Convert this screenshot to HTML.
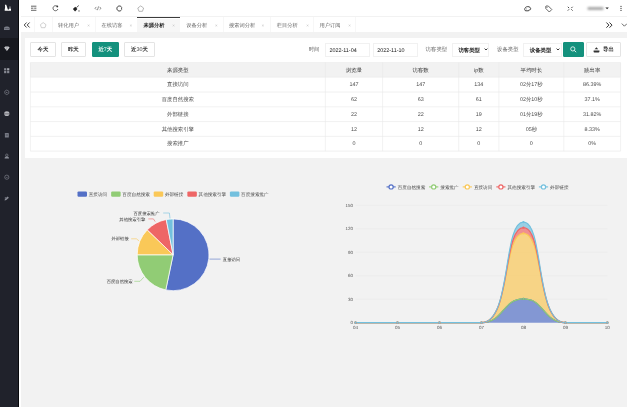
<!DOCTYPE html>
<html><head><meta charset="utf-8">
<style>
*{margin:0;padding:0;box-sizing:border-box}
html,body{width:627px;height:407px;overflow:hidden;background:#f2f2f2;font-family:"Liberation Sans",sans-serif;color:#555;text-rendering:geometricPrecision}
#wrap{position:absolute;left:0;top:0;width:627px;height:407px;will-change:transform}
#side{position:absolute;left:0;top:0;width:19px;height:407px;background:#20222b}
#sact{position:absolute;left:0;top:37.7px;width:19px;height:22px;background:#17181e}
#sideedge{position:absolute;left:18.2px;top:0;width:1px;height:407px;background:#08090c}
#wstrip{position:absolute;left:19.2px;top:0;width:2px;height:407px;background:#fff}
#hdr{position:absolute;left:19px;top:0;width:608px;height:17.2px;background:#fff;border-bottom:0.5px solid #f2f2f2}
#tabs{position:absolute;left:19px;top:17.2px;width:608px;height:15.2px;background:#fff}
.tab{position:absolute;top:17.2px;height:15.2px;font-size:5.25px;line-height:18px;color:#666;white-space:nowrap}
.tab .x{position:absolute;top:0;font-size:4.5px;color:#aaa}
.sep{position:absolute;top:17.2px;width:0.5px;height:15.2px;background:#f7f7f7}
#card{position:absolute;left:25px;top:37.5px;width:602px;height:120.5px;background:#fff}
.btn{position:absolute;top:42.3px;height:14.3px;border:0.5px solid #e4e4e4;border-radius:1px;background:#fff;font-size:5.4px;line-height:15.8px;text-align:center;color:#333}
.btn.g{background:#14917d;border-color:#14917d;color:#fff}
.lbl{position:absolute;top:42.3px;height:14.3px;font-size:5.4px;line-height:16.9px;color:#666}
.inp{position:absolute;top:42.5px;height:14px;border:0.5px solid #f1f1f1;background:#fff;font-size:5.4px;line-height:14.6px;color:#111;padding-left:3.6px}
.sel{color:#222;padding-left:5.5px}
.td{position:absolute;height:14.77px;font-size:5.4px;text-align:center;color:#4a4a4a;line-height:17.6px;white-space:nowrap}
.td.h{color:#333;line-height:16.8px}
svg text{font-family:"Liberation Sans",sans-serif}
b.c{font-weight:500}
.act b.c{font-weight:700}
.btn b.c,.sel b.c{font-weight:700}
tspan.c{font-weight:500}
.pl{font-size:4.35px;fill:#333}
.lg{font-size:4.6px;fill:#444}
.ax{font-size:4.5px;fill:#555}
</style></head><body><div id="wrap">
<div id="side"></div>
<div id="sact"></div>
<div id="sideedge"></div>
<div id="hdr"></div>
<div id="tabs"></div>
<div id="wstrip"></div>

<div style="position:absolute;left:137.4px;top:18.8px;width:42.3px;height:13.6px;background:#f6f6f6"></div>
<div style="position:absolute;left:137.4px;top:17.2px;width:42.3px;height:1.3px;background:#3c3c3c"></div>
<div class="sep" style="left:34.3px"></div>
<div class="sep" style="left:51.6px"></div>
<div class="sep" style="left:95px"></div><div class="sep" style="left:222.6px"></div><div class="sep" style="left:270px"></div><div class="sep" style="left:313px"></div><div class="sep" style="left:355px"></div>
<div class="tab" style="left:57.9px"><b class="c">转化用户</b></div><div class="tab" style="left:87.3px;font-size:4.5px;color:#c2c2c2;line-height:18.6px">×</div>
<div class="tab" style="left:101.5px"><b class="c">在线访客</b></div><div class="tab" style="left:129.60000000000002px;font-size:4.5px;color:#c2c2c2;line-height:18.6px">×</div>
<div class="tab act" style="left:143.4px;color:#222"><b class="c">来源分析</b></div><div class="tab" style="left:172.20000000000002px;font-size:4.5px;color:#c2c2c2;line-height:18.6px">×</div>
<div class="tab" style="left:186.2px"><b class="c">设备分析</b></div><div class="tab" style="left:215.10000000000002px;font-size:4.5px;color:#c2c2c2;line-height:18.6px">×</div>
<div class="tab" style="left:229px"><b class="c">搜索词分析</b></div><div class="tab" style="left:261.6px;font-size:4.5px;color:#c2c2c2;line-height:18.6px">×</div>
<div class="tab" style="left:276.8px"><b class="c">栏目分析</b></div><div class="tab" style="left:306.3px;font-size:4.5px;color:#c2c2c2;line-height:18.6px">×</div>
<div class="tab" style="left:319.5px"><b class="c">用户订阅</b></div><div class="tab" style="left:348.2px;font-size:4.5px;color:#c2c2c2;line-height:18.6px">×</div>

<div id="card"></div>
<div class="btn" style="left:30.4px;width:25.2px"><b class="c">今天</b></div>
<div class="btn" style="left:61px;width:24.6px"><b class="c">昨天</b></div>
<div class="btn g" style="left:91.7px;width:27.2px"><b class="c">近</b>7<b class="c">天</b></div>
<div class="btn" style="left:124.3px;width:30.3px"><b class="c">近</b>30<b class="c">天</b></div>

<div class="lbl" style="left:308.7px"><b class="c">时间</b></div>
<div class="inp" style="left:324.9px;width:45.3px">2022-11-04</div>
<div class="inp" style="left:372.7px;width:45.2px">2022-11-10</div>
<div class="lbl" style="left:425.6px"><b class="c">访客类型</b></div>
<div class="inp sel" style="left:451.9px;width:37.5px"><b class="c">访客类型</b></div>
<div class="lbl" style="left:497px"><b class="c">设备类型</b></div>
<div class="inp sel" style="left:523.3px;width:38.3px"><b class="c">设备类型</b></div>
<div class="btn g" style="left:562.9px;width:21px"></div>
<div class="btn" style="left:586.2px;width:34.4px;padding-left:10px"><b class="c">导出</b></div>

<div style="position:absolute;left:30.4px;top:62.5px;width:590.20px;height:14.77px;background:#f2f2f2"></div>
<svg width="627" height="407" style="position:absolute;left:0;top:0">
<line x1="30.4" y1="62.50" x2="620.6" y2="62.50" stroke="#e8e8e8" stroke-width="0.6"/>
<line x1="30.4" y1="77.27" x2="620.6" y2="77.27" stroke="#e8e8e8" stroke-width="0.6"/>
<line x1="30.4" y1="92.04" x2="620.6" y2="92.04" stroke="#e8e8e8" stroke-width="0.6"/>
<line x1="30.4" y1="106.81" x2="620.6" y2="106.81" stroke="#e8e8e8" stroke-width="0.6"/>
<line x1="30.4" y1="121.58" x2="620.6" y2="121.58" stroke="#e8e8e8" stroke-width="0.6"/>
<line x1="30.4" y1="136.35" x2="620.6" y2="136.35" stroke="#e8e8e8" stroke-width="0.6"/>
<line x1="30.4" y1="151.12" x2="620.6" y2="151.12" stroke="#e8e8e8" stroke-width="0.6"/>
<line x1="30.4" y1="62.5" x2="30.4" y2="151.12" stroke="#e8e8e8" stroke-width="0.6"/>
<line x1="325.3" y1="62.5" x2="325.3" y2="151.12" stroke="#e8e8e8" stroke-width="0.6"/>
<line x1="382.6" y1="62.5" x2="382.6" y2="151.12" stroke="#e8e8e8" stroke-width="0.6"/>
<line x1="458.7" y1="62.5" x2="458.7" y2="151.12" stroke="#e8e8e8" stroke-width="0.6"/>
<line x1="498.9" y1="62.5" x2="498.9" y2="151.12" stroke="#e8e8e8" stroke-width="0.6"/>
<line x1="563.8" y1="62.5" x2="563.8" y2="151.12" stroke="#e8e8e8" stroke-width="0.6"/>
<line x1="620.6" y1="62.5" x2="620.6" y2="151.12" stroke="#e8e8e8" stroke-width="0.6"/>
</svg>
<div class="td h" style="left:30.40px;top:62.50px;width:294.90px"><b class="c">来源类型</b></div>
<div class="td h" style="left:325.30px;top:62.50px;width:57.30px"><b class="c">浏览量</b></div>
<div class="td h" style="left:382.60px;top:62.50px;width:76.10px"><b class="c">访客数</b></div>
<div class="td h" style="left:458.70px;top:62.50px;width:40.20px">ip<b class="c">数</b></div>
<div class="td h" style="left:498.90px;top:62.50px;width:64.90px"><b class="c">平均时长</b></div>
<div class="td h" style="left:563.80px;top:62.50px;width:56.80px"><b class="c">跳出率</b></div>
<div class="td" style="left:30.40px;top:77.27px;width:294.90px"><b class="c">直接访问</b></div>
<div class="td" style="left:325.30px;top:77.27px;width:57.30px">147</div>
<div class="td" style="left:382.60px;top:77.27px;width:76.10px">147</div>
<div class="td" style="left:458.70px;top:77.27px;width:40.20px">134</div>
<div class="td" style="left:498.90px;top:77.27px;width:64.90px">02<b class="c">分</b>17<b class="c">秒</b></div>
<div class="td" style="left:563.80px;top:77.27px;width:56.80px">86.39%</div>
<div class="td" style="left:30.40px;top:92.04px;width:294.90px"><b class="c">百度自然搜索</b></div>
<div class="td" style="left:325.30px;top:92.04px;width:57.30px">62</div>
<div class="td" style="left:382.60px;top:92.04px;width:76.10px">63</div>
<div class="td" style="left:458.70px;top:92.04px;width:40.20px">61</div>
<div class="td" style="left:498.90px;top:92.04px;width:64.90px">02<b class="c">分</b>10<b class="c">秒</b></div>
<div class="td" style="left:563.80px;top:92.04px;width:56.80px">37.1%</div>
<div class="td" style="left:30.40px;top:106.81px;width:294.90px"><b class="c">外部链接</b></div>
<div class="td" style="left:325.30px;top:106.81px;width:57.30px">22</div>
<div class="td" style="left:382.60px;top:106.81px;width:76.10px">22</div>
<div class="td" style="left:458.70px;top:106.81px;width:40.20px">19</div>
<div class="td" style="left:498.90px;top:106.81px;width:64.90px">01<b class="c">分</b>19<b class="c">秒</b></div>
<div class="td" style="left:563.80px;top:106.81px;width:56.80px">31.82%</div>
<div class="td" style="left:30.40px;top:121.58px;width:294.90px"><b class="c">其他搜索引擎</b></div>
<div class="td" style="left:325.30px;top:121.58px;width:57.30px">12</div>
<div class="td" style="left:382.60px;top:121.58px;width:76.10px">12</div>
<div class="td" style="left:458.70px;top:121.58px;width:40.20px">12</div>
<div class="td" style="left:498.90px;top:121.58px;width:64.90px">05<b class="c">秒</b></div>
<div class="td" style="left:563.80px;top:121.58px;width:56.80px">8.33%</div>
<div class="td" style="left:30.40px;top:136.35px;width:294.90px"><b class="c">搜索推广</b></div>
<div class="td" style="left:325.30px;top:136.35px;width:57.30px">0</div>
<div class="td" style="left:382.60px;top:136.35px;width:76.10px">0</div>
<div class="td" style="left:458.70px;top:136.35px;width:40.20px">0</div>
<div class="td" style="left:498.90px;top:136.35px;width:64.90px">0</div>
<div class="td" style="left:563.80px;top:136.35px;width:56.80px">0%</div>


<svg width="627" height="407" style="position:absolute;left:0;top:0" id="main">
<!-- sidebar logo -->
<g fill="#fff"><path d="M4.9,4.7h1.3c0.5,1.3 1.2,3.2 1.6,4.9h1.2v-1h2v2.2h-6.3v-1.2c0.4,-1.5 0.6,-3.2 0.2,-4.9z"/><circle cx="10" cy="7.1" r="0.6"/></g>
<!-- sidebar icons -->
<path d="M4,29.9v-1.6c0,-1.2 0.9,-1.9 2.1,-1.9h1.5c1.2,0 2,0.7 2,1.9v1.6z" fill="#7b7e89"/><path d="M4.6,28.6h4.4" stroke="#2a2c35" stroke-width="0.4"/>
<path d="M4.2,47.6l1.2,-1.2h3l1.2,1.2l-2.7,3.4z" fill="#d6d7dc"/><path d="M5.4,47.8h3M6.9,47.8l-0.5,2.2" stroke="#555" stroke-width="0.35" fill="none"/>
<rect x="4.1" y="68.2" width="2.2" height="2.2" fill="#858892"/><rect x="7.1" y="68.2" width="2.2" height="2.2" fill="#a5a8b0"/><rect x="4.1" y="71" width="2.2" height="2.2" fill="#858892"/><rect x="7.1" y="71" width="2.2" height="2.2" fill="#858892"/>
<path d="M6.8,90l2,1.15v2.3l-2,1.15l-2,-1.15v-2.3z" fill="none" stroke="#8a8d97" stroke-width="0.6"/><circle cx="6.8" cy="92.3" r="0.6" fill="#8a8d97"/>
<ellipse cx="6.8" cy="113.7" rx="2.6" ry="2.4" fill="#b4b5bb"/><path d="M4.3,113.9h5" stroke="#3a3c45" stroke-width="0.6"/>
<rect x="4.9" y="133" width="3.9" height="4.6" rx="0.4" fill="#7b7e89"/><path d="M5.6,134.4h2.4M5.6,135.6h2.4" stroke="#2a2c35" stroke-width="0.35"/>
<circle cx="6.8" cy="155.2" r="1.2" fill="none" stroke="#8a8d97" stroke-width="0.6"/><path d="M4.6,158.4c0,-1.4 0.9,-2 2.2,-2s2.2,0.6 2.2,2z" fill="#8a8d97"/>
<circle cx="6.8" cy="177.2" r="2.1" fill="none" stroke="#8a8d97" stroke-width="0.6"/><path d="M5.9,177.1l0.8,0.8l1.1,-1.2" stroke="#8a8d97" stroke-width="0.5" fill="none"/>
<path d="M4.6,200.4l0.4,-1.6l2.6,-2.4l1.3,1.3l-2.6,2.4z" fill="#8a8d97"/><rect x="4.8" y="197" width="1.6" height="1.4" fill="#5a5d68"/>
<!-- header icons -->
<g stroke="#333" stroke-width="0.75" fill="none">
<path d="M31,6.2h5.4M31,8.2h2.4M34.2,8.2h2.2M31,10.3h5.4"/>
<path d="M57.4,6.6A2.5,2.5 0 1 0 57.9,9"/>
</g>
<circle cx="57.3" cy="6.4" r="0.9" fill="#333"/>
<path d="M72.9,8.9l2.4,-2.2l2.1,2.3l-2.3,2.4z" fill="#222"/><path d="M76.4,7.6l2.4,-2.1" stroke="#333" stroke-width="0.8"/><circle cx="79" cy="10.9" r="0.6" fill="#333"/>
<path d="M96.4,6.9l-1.4,1.4l1.4,1.4M99.6,6.9l1.4,1.4l-1.4,1.4M98.6,6.4l-1.2,3.8" stroke="#444" stroke-width="0.6" fill="none"/>
<path d="M121.8,7.6c-0.4,-1 -1.3,-1.6 -2.4,-1.6c-1.4,0 -2.5,1.1 -2.5,2.5s1.1,2.5 2.5,2.5c1,0 1.9,-0.6 2.3,-1.5" fill="none" stroke="#333" stroke-width="1"/><circle cx="121.6" cy="8.5" r="0.55" fill="#333"/>
<path d="M140.7,5.9l2.9,2.1l-1.1,3.3h-3.6l-1.1,-3.3z" fill="none" stroke="#888" stroke-width="0.6" stroke-linejoin="round"/>
<!-- header right -->
<path d="M524.7,9.6c0,-2 1.4,-3 3.1,-3c1.9,0 2.9,1.1 2.9,2.2c0,0.9 -0.7,1.2 -1.3,1.1c-0.6,-0.1 -0.9,0.4 -0.8,0.9h-2.7c-0.8,0 -1.2,-0.5 -1.2,-1.2z" fill="none" stroke="#333" stroke-width="0.9"/><circle cx="526.6" cy="8.9" r="0.45" fill="#333"/>
<path d="M545.8,6.2v2.3l3.5,3.5l2.5,-2.5l-3.5,-3.5h-2.3z" fill="none" stroke="#444" stroke-width="0.8" stroke-linejoin="round"/><circle cx="547" cy="7.5" r="0.5" fill="#555"/>
<path d="M567.8,6.8l1.3,1.3M572.6,6.8l-1.3,1.3M567.8,10.6l1.3,-1.3M572.6,10.6l-1.3,-1.3" stroke="#333" stroke-width="0.9"/>
<g style="filter:blur(0.9px)"><rect x="587.5" y="6.9" width="16" height="3.2" rx="1" fill="#aaa"/></g>
<path d="M605.4,7.4h3.4l-1.7,1.9z" fill="#222"/>
<circle cx="621" cy="6.4" r="0.55" fill="#333"/><circle cx="621" cy="8.4" r="0.55" fill="#333"/><circle cx="621" cy="10.4" r="0.55" fill="#333"/>
<!-- tab row icons -->
<path d="M26.6,22.5l-2.4,2.5l2.4,2.5M29.6,22.5l-2.4,2.5l2.4,2.5" fill="none" stroke="#333" stroke-width="0.9"/>
<path d="M43.2,22.6l2.8,2.1l-1,3h-3.6l-1,-3z" fill="none" stroke="#aaa" stroke-width="0.55" stroke-linejoin="round"/>
<path d="M606.4,22.5l2.5,2.6l-2.5,2.6M609.5,22.5l2.5,2.6l-2.5,2.6" fill="none" stroke="#333" stroke-width="1"/>
<path d="M621.8,23.6l2.6,2.6l2.6,-2.6" fill="none" stroke="#444" stroke-width="0.8"/>
<path d="M173.1,254.8L173.10,218.90A35.9,35.9 0 1 1 165.76,289.94Z" fill="#5470c6" stroke="#fff" stroke-width="0.7" stroke-linejoin="round"/>
<path d="M173.1,254.8L165.76,289.94A35.9,35.9 0 0 1 137.20,254.80Z" fill="#91cc75" stroke="#fff" stroke-width="0.7" stroke-linejoin="round"/>
<path d="M173.1,254.8L137.20,254.80A35.9,35.9 0 0 1 147.28,229.86Z" fill="#fac858" stroke="#fff" stroke-width="0.7" stroke-linejoin="round"/>
<path d="M173.1,254.8L147.28,229.86A35.9,35.9 0 0 1 166.25,219.56Z" fill="#ee6666" stroke="#fff" stroke-width="0.7" stroke-linejoin="round"/>
<path d="M173.1,254.8L166.25,219.56A35.9,35.9 0 0 1 173.10,218.90Z" fill="#73c0de" stroke="#fff" stroke-width="0.7" stroke-linejoin="round"/>
<polyline points="209.5,259.1 220.6,259.1" fill="none" stroke="#5470c6" stroke-width="0.6"/>
<text x="222.8" y="260.70000000000005" text-anchor="start" class="pl"><tspan class="c">直接访问</tspan></text>
<polyline points="143.9,277.1 140,281.3 134.3,281.3" fill="none" stroke="#91cc75" stroke-width="0.6"/>
<text x="132.7" y="282.8" text-anchor="end" class="pl"><tspan class="c">百度自然搜索</tspan></text>
<polyline points="139.1,240.9 136.4,238.8 131.2,238.8" fill="none" stroke="#fac858" stroke-width="0.6"/>
<text x="128.8" y="240.4" text-anchor="end" class="pl"><tspan class="c">外部链接</tspan></text>
<polyline points="155.2,221.6 153.4,218.9 148.4,218.9" fill="none" stroke="#ee6666" stroke-width="0.6"/>
<text x="145.4" y="220.5" text-anchor="end" class="pl"><tspan class="c">其他搜索引擎</tspan></text>
<polyline points="170,218.5 169.4,213 163.2,213" fill="none" stroke="#73c0de" stroke-width="0.6"/>
<text x="159.5" y="214.6" text-anchor="end" class="pl"><tspan class="c">百度搜索推广</tspan></text>
<rect x="77.50" y="191.4" width="9.5" height="5.4" rx="1.2" fill="#5470c6"/>
<text x="88.70" y="195.7" class="lg"><tspan class="c">直接访问</tspan></text>
<rect x="111.15" y="191.4" width="9.5" height="5.4" rx="1.2" fill="#91cc75"/>
<text x="122.35" y="195.7" class="lg"><tspan class="c">百度自然搜索</tspan></text>
<rect x="153.70" y="191.4" width="9.5" height="5.4" rx="1.2" fill="#fac858"/>
<text x="164.90" y="195.7" class="lg"><tspan class="c">外部链接</tspan></text>
<rect x="187.35" y="191.4" width="9.5" height="5.4" rx="1.2" fill="#ee6666"/>
<text x="198.55" y="195.7" class="lg"><tspan class="c">其他搜索引擎</tspan></text>
<rect x="229.90" y="191.4" width="9.5" height="5.4" rx="1.2" fill="#73c0de"/>
<text x="241.10" y="195.7" class="lg"><tspan class="c">百度搜索推广</tspan></text>
<line x1="355.5" y1="299.22" x2="607.38" y2="299.22" stroke="#e6e6e6" stroke-width="0.4"/>
<line x1="355.5" y1="275.74" x2="607.38" y2="275.74" stroke="#e6e6e6" stroke-width="0.4"/>
<line x1="355.5" y1="252.26" x2="607.38" y2="252.26" stroke="#e6e6e6" stroke-width="0.4"/>
<line x1="355.5" y1="228.78" x2="607.38" y2="228.78" stroke="#e6e6e6" stroke-width="0.4"/>
<line x1="355.5" y1="205.30" x2="607.38" y2="205.30" stroke="#e6e6e6" stroke-width="0.4"/>
<text x="353.1" y="324.40" text-anchor="end" class="ax">0</text>
<text x="353.1" y="300.92" text-anchor="end" class="ax">30</text>
<text x="353.1" y="277.44" text-anchor="end" class="ax">60</text>
<text x="353.1" y="253.96" text-anchor="end" class="ax">90</text>
<text x="353.1" y="230.48" text-anchor="end" class="ax">120</text>
<text x="353.1" y="207.00" text-anchor="end" class="ax">150</text>
<text x="355.50" y="329.4" text-anchor="middle" class="ax">04</text>
<text x="397.48" y="329.4" text-anchor="middle" class="ax">05</text>
<text x="439.46" y="329.4" text-anchor="middle" class="ax">06</text>
<text x="481.44" y="329.4" text-anchor="middle" class="ax">07</text>
<text x="523.42" y="329.4" text-anchor="middle" class="ax">08</text>
<text x="565.40" y="329.4" text-anchor="middle" class="ax">09</text>
<text x="607.38" y="329.4" text-anchor="middle" class="ax">10</text>
<path d="M355.50,322.70C355.50,322.70 376.49,322.70 397.48,322.70C418.47,322.70 418.47,322.70 439.46,322.70C460.45,322.70 461.92,322.70 481.44,322.70C503.90,322.70 502.43,298.80 523.42,298.80C544.41,298.80 542.94,322.70 565.40,322.70C584.92,322.70 607.38,322.70 607.38,322.70L607.38,322.70C607.38,322.70 586.39,322.70 565.40,322.70C544.41,322.70 544.41,322.70 523.42,322.70C502.43,322.70 502.43,322.70 481.44,322.70C460.45,322.70 460.45,322.70 439.46,322.70C418.47,322.70 418.47,322.70 397.48,322.70C376.49,322.70 355.50,322.70 355.50,322.70Z" fill="#5470c6" fill-opacity="0.7"/>
<path d="M355.50,322.70C355.50,322.70 376.49,322.70 397.48,322.70C418.47,322.70 418.47,322.70 439.46,322.70C460.45,322.70 461.92,322.70 481.44,322.70C503.90,322.70 502.43,298.80 523.42,298.80C544.41,298.80 542.94,322.70 565.40,322.70C584.92,322.70 607.38,322.70 607.38,322.70L607.38,322.70C607.38,322.70 584.92,322.70 565.40,322.70C542.94,322.70 544.41,298.80 523.42,298.80C502.43,298.80 503.90,322.70 481.44,322.70C461.92,322.70 460.45,322.70 439.46,322.70C418.47,322.70 418.47,322.70 397.48,322.70C376.49,322.70 355.50,322.70 355.50,322.70Z" fill="#91cc75" fill-opacity="0.7"/>
<path d="M355.50,322.70C355.50,322.70 376.49,322.70 397.48,322.70C418.47,322.70 418.47,322.70 439.46,322.70C460.45,322.70 468.91,322.70 481.44,322.70C510.89,322.70 502.43,233.40 523.42,233.40C544.41,233.40 535.95,322.70 565.40,322.70C577.93,322.70 607.38,322.70 607.38,322.70L607.38,322.70C607.38,322.70 584.92,322.70 565.40,322.70C542.94,322.70 544.41,298.80 523.42,298.80C502.43,298.80 503.90,322.70 481.44,322.70C461.92,322.70 460.45,322.70 439.46,322.70C418.47,322.70 418.47,322.70 397.48,322.70C376.49,322.70 355.50,322.70 355.50,322.70Z" fill="#fac858" fill-opacity="0.7"/>
<path d="M355.50,322.70C355.50,322.70 376.49,322.70 397.48,322.70C418.47,322.70 418.47,322.70 439.46,322.70C460.45,322.70 469.36,322.70 481.44,322.70C511.34,322.70 502.43,227.70 523.42,227.70C544.41,227.70 535.50,322.70 565.40,322.70C577.48,322.70 607.38,322.70 607.38,322.70L607.38,322.70C607.38,322.70 577.93,322.70 565.40,322.70C535.95,322.70 544.41,233.40 523.42,233.40C502.43,233.40 510.89,322.70 481.44,322.70C468.91,322.70 460.45,322.70 439.46,322.70C418.47,322.70 418.47,322.70 397.48,322.70C376.49,322.70 355.50,322.70 355.50,322.70Z" fill="#ee6666" fill-opacity="0.7"/>
<path d="M355.50,322.70C355.50,322.70 376.49,322.70 397.48,322.70C418.47,322.70 418.47,322.70 439.46,322.70C460.45,322.70 469.76,322.70 481.44,322.70C511.74,322.70 502.43,222.20 523.42,222.20C544.41,222.20 535.10,322.70 565.40,322.70C577.08,322.70 607.38,322.70 607.38,322.70L607.38,322.70C607.38,322.70 577.48,322.70 565.40,322.70C535.50,322.70 544.41,227.70 523.42,227.70C502.43,227.70 511.34,322.70 481.44,322.70C469.36,322.70 460.45,322.70 439.46,322.70C418.47,322.70 418.47,322.70 397.48,322.70C376.49,322.70 355.50,322.70 355.50,322.70Z" fill="#73c0de" fill-opacity="0.7"/>
<path d="M355.50,322.70C355.50,322.70 376.49,322.70 397.48,322.70C418.47,322.70 418.47,322.70 439.46,322.70C460.45,322.70 461.92,322.70 481.44,322.70C503.90,322.70 502.43,298.80 523.42,298.80C544.41,298.80 542.94,322.70 565.40,322.70C584.92,322.70 607.38,322.70 607.38,322.70" fill="none" stroke="#5470c6" stroke-width="1.2"/>
<path d="M355.50,322.70C355.50,322.70 376.49,322.70 397.48,322.70C418.47,322.70 418.47,322.70 439.46,322.70C460.45,322.70 461.92,322.70 481.44,322.70C503.90,322.70 502.43,298.80 523.42,298.80C544.41,298.80 542.94,322.70 565.40,322.70C584.92,322.70 607.38,322.70 607.38,322.70" fill="none" stroke="#91cc75" stroke-width="1.2"/>
<path d="M355.50,322.70C355.50,322.70 376.49,322.70 397.48,322.70C418.47,322.70 418.47,322.70 439.46,322.70C460.45,322.70 468.91,322.70 481.44,322.70C510.89,322.70 502.43,233.40 523.42,233.40C544.41,233.40 535.95,322.70 565.40,322.70C577.93,322.70 607.38,322.70 607.38,322.70" fill="none" stroke="#fac858" stroke-width="1.2"/>
<path d="M355.50,322.70C355.50,322.70 376.49,322.70 397.48,322.70C418.47,322.70 418.47,322.70 439.46,322.70C460.45,322.70 469.36,322.70 481.44,322.70C511.34,322.70 502.43,227.70 523.42,227.70C544.41,227.70 535.50,322.70 565.40,322.70C577.48,322.70 607.38,322.70 607.38,322.70" fill="none" stroke="#ee6666" stroke-width="1.2"/>
<path d="M355.50,322.70C355.50,322.70 376.49,322.70 397.48,322.70C418.47,322.70 418.47,322.70 439.46,322.70C460.45,322.70 469.76,322.70 481.44,322.70C511.74,322.70 502.43,222.20 523.42,222.20C544.41,222.20 535.10,322.70 565.40,322.70C577.08,322.70 607.38,322.70 607.38,322.70" fill="none" stroke="#73c0de" stroke-width="1.2"/>
<circle cx="355.50" cy="322.70" r="1.1" fill="#5470c6"/>
<circle cx="397.48" cy="322.70" r="1.1" fill="#5470c6"/>
<circle cx="439.46" cy="322.70" r="1.1" fill="#5470c6"/>
<circle cx="481.44" cy="322.70" r="1.1" fill="#5470c6"/>
<circle cx="523.42" cy="298.80" r="1.1" fill="#5470c6"/>
<circle cx="565.40" cy="322.70" r="1.1" fill="#5470c6"/>
<circle cx="607.38" cy="322.70" r="1.1" fill="#5470c6"/>
<circle cx="355.50" cy="322.70" r="1.1" fill="#91cc75"/>
<circle cx="397.48" cy="322.70" r="1.1" fill="#91cc75"/>
<circle cx="439.46" cy="322.70" r="1.1" fill="#91cc75"/>
<circle cx="481.44" cy="322.70" r="1.1" fill="#91cc75"/>
<circle cx="523.42" cy="298.80" r="1.1" fill="#91cc75"/>
<circle cx="565.40" cy="322.70" r="1.1" fill="#91cc75"/>
<circle cx="607.38" cy="322.70" r="1.1" fill="#91cc75"/>
<circle cx="355.50" cy="322.70" r="1.1" fill="#fac858"/>
<circle cx="397.48" cy="322.70" r="1.1" fill="#fac858"/>
<circle cx="439.46" cy="322.70" r="1.1" fill="#fac858"/>
<circle cx="481.44" cy="322.70" r="1.1" fill="#fac858"/>
<circle cx="523.42" cy="233.40" r="1.1" fill="#fac858"/>
<circle cx="565.40" cy="322.70" r="1.1" fill="#fac858"/>
<circle cx="607.38" cy="322.70" r="1.1" fill="#fac858"/>
<circle cx="355.50" cy="322.70" r="1.1" fill="#ee6666"/>
<circle cx="397.48" cy="322.70" r="1.1" fill="#ee6666"/>
<circle cx="439.46" cy="322.70" r="1.1" fill="#ee6666"/>
<circle cx="481.44" cy="322.70" r="1.1" fill="#ee6666"/>
<circle cx="523.42" cy="227.70" r="1.1" fill="#ee6666"/>
<circle cx="565.40" cy="322.70" r="1.1" fill="#ee6666"/>
<circle cx="607.38" cy="322.70" r="1.1" fill="#ee6666"/>
<circle cx="355.50" cy="322.70" r="1.1" fill="#73c0de"/>
<circle cx="397.48" cy="322.70" r="1.1" fill="#73c0de"/>
<circle cx="439.46" cy="322.70" r="1.1" fill="#73c0de"/>
<circle cx="481.44" cy="322.70" r="1.1" fill="#73c0de"/>
<circle cx="523.42" cy="222.20" r="1.1" fill="#73c0de"/>
<circle cx="565.40" cy="322.70" r="1.1" fill="#73c0de"/>
<circle cx="607.38" cy="322.70" r="1.1" fill="#73c0de"/>
<line x1="386.5" y1="186.9" x2="395.7" y2="186.9" stroke="#5470c6" stroke-width="1.1"/>
<circle cx="391.1" cy="186.9" r="2.1" fill="#fff" stroke="#5470c6" stroke-width="1.2"/>
<text x="397.70" y="188.5" class="lg"><tspan class="c">百度自然搜索</tspan></text>
<line x1="429.1" y1="186.9" x2="438.3" y2="186.9" stroke="#91cc75" stroke-width="1.1"/>
<circle cx="433.70000000000005" cy="186.9" r="2.1" fill="#fff" stroke="#91cc75" stroke-width="1.2"/>
<text x="440.30" y="188.5" class="lg"><tspan class="c">搜索推广</tspan></text>
<line x1="462.70000000000005" y1="186.9" x2="471.90000000000003" y2="186.9" stroke="#fac858" stroke-width="1.1"/>
<circle cx="467.30000000000007" cy="186.9" r="2.1" fill="#fff" stroke="#fac858" stroke-width="1.2"/>
<text x="473.90" y="188.5" class="lg"><tspan class="c">直接访问</tspan></text>
<line x1="496.30000000000007" y1="186.9" x2="505.50000000000006" y2="186.9" stroke="#ee6666" stroke-width="1.1"/>
<circle cx="500.9000000000001" cy="186.9" r="2.1" fill="#fff" stroke="#ee6666" stroke-width="1.2"/>
<text x="507.50" y="188.5" class="lg"><tspan class="c">其他搜索引擎</tspan></text>
<line x1="538.9000000000001" y1="186.9" x2="548.1000000000001" y2="186.9" stroke="#73c0de" stroke-width="1.1"/>
<circle cx="543.5000000000001" cy="186.9" r="2.1" fill="#fff" stroke="#73c0de" stroke-width="1.2"/>
<text x="550.10" y="188.5" class="lg"><tspan class="c">外部链接</tspan></text>
<path d="M484.6,48.6l1.4,1.4l1.4,-1.4M556.6,48.6l1.4,1.4l1.4,-1.4" fill="none" stroke="#222" stroke-width="0.9"/>
<!-- search icon -->
<circle cx="572.8" cy="48.9" r="2.1" fill="none" stroke="#fff" stroke-width="0.8"/><path d="M574.3,50.4l1.8,1.8" stroke="#fff" stroke-width="0.9"/>
<!-- export icon -->
<path d="M596.4,47.3l1.8,2h-3.6z" fill="#333"/><path d="M593.6,50.6h5.8v1.2c0,0.5 -0.4,0.8 -0.8,0.8h-4.2c-0.5,0 -0.8,-0.3 -0.8,-0.8z" fill="#333"/>
</svg>
</div></body></html>
